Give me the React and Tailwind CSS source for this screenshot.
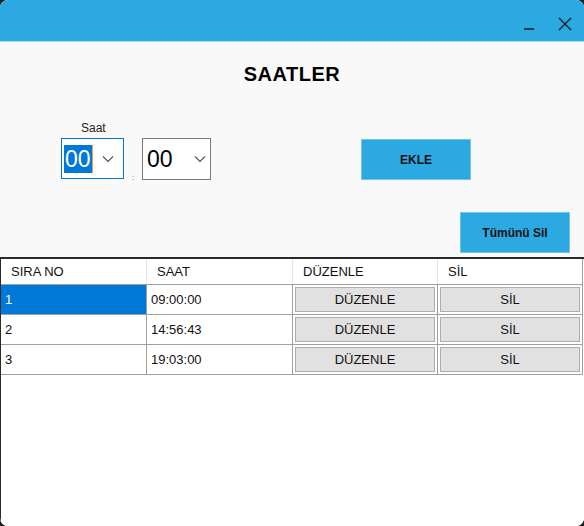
import React from "react";

const rows = [
  { no: "1", saat: "09:00:00", selected: true },
  { no: "2", saat: "14:56:43" },
  { no: "3", saat: "19:03:00" },
];

const Chevron = () => (
  <svg width="12" height="8" viewBox="0 0 12 8" className="text-[#555]">
    <path d="M1 1.5 L6 6.5 L11 1.5" fill="none" stroke="currentColor" strokeWidth="1.2" />
  </svg>
);

const CellButton = ({ label }) => (
  <div className="h-full p-[2px]">
    <div className="h-full bg-[#e1e1e1] border border-[#adadad] flex items-center justify-center text-[13px] text-[#111]">
      {label}
    </div>
  </div>
);

export default function App() {
  return (
    <div className="w-[584px] h-[526px] bg-[#1f1f1f] font-['Liberation_Sans',Arial,sans-serif]">
      <div className="w-full h-full rounded-[8px] overflow-hidden flex flex-col bg-white">
        {/* title bar */}
        <div className="h-[42px] bg-[#2ca9e1] border-b border-[#a8dcf3] flex items-end justify-end pb-[10px] pr-[12px] gap-[24px] shrink-0">
          <div className="w-[10px] h-[2px] bg-[#1d3b4c] mb-[1px]" />
          <svg width="14" height="14" viewBox="0 0 14 14">
            <path d="M1 1 L13 13 M13 1 L1 13" stroke="#1a2a33" strokeWidth="1.5" />
          </svg>
        </div>

        {/* form area */}
        <div className="bg-[#f9f9f9] h-[215px] shrink-0">
          <h1 className="text-center text-[20px] font-bold tracking-[0.5px] text-black mt-[21px] leading-[22px]">SAATLER</h1>
          <div className="flex mt-[36px]">
            <div className="ml-[61px] flex flex-col">
              <span className="text-[12px] text-[#222] ml-[20px] leading-[14px]">Saat</span>
              <div className="flex items-start mt-[3px]">
                <div className="w-[63px] h-[41px] bg-white border border-[#0078d7] flex items-center pl-[2px] pr-[9px] justify-between">
                  <span className="bg-[#0078d7] text-white text-[23px] leading-[28px] px-[1px] border-r border-[#f29b4a]">00</span>
                  <Chevron />
                </div>
                <span className="w-[18px] text-center text-[8px] text-[#666] mt-[36px] leading-[8px]">:</span>
                <div className="w-[69px] h-[42px] bg-white border border-[#7a7a7a] flex items-center pl-[4px] pr-[4px] justify-between">
                  <span className="text-black text-[23px] leading-[28px]">00</span>
                  <Chevron />
                </div>
              </div>
            </div>
            <div className="ml-[150px] mt-[18px] w-[110px] h-[41px] bg-[#2ca9e1] border border-[#6ec6ee] flex items-center justify-center text-[12px] font-bold text-[#111]">
              EKLE
            </div>
          </div>
          <div className="flex justify-end pr-[14px] mt-[30px]">
            <div className="w-[110px] h-[41px] bg-[#2ca9e1] border border-[#6ec6ee] flex items-center justify-center text-[12px] font-bold text-[#111]">
              Tümünü Sil
            </div>
          </div>
        </div>

        {/* grid */}
        <div className="flex-1 bg-white border-t-2 border-t-[#2a2a2a] border-l border-l-[#2a2a2a] flex flex-col">
          <div className="grid grid-cols-[146px_146px_145px_144px] border-b border-[#a0a0a0] border-r border-r-[#a0a0a0] w-[582px]">
            {["SIRA NO", "SAAT", "DÜZENLE", "SİL"].map((h, i) => (
              <div
                key={h}
                className={`h-[25px] flex items-center text-[13px] text-[#111] pl-[10px] ${i < 3 ? "border-r border-[#e4e4e4]" : ""}`}
              >
                {h}
              </div>
            ))}
            {rows.map((r) => (
              <React.Fragment key={r.no}>
                <div
                  className={`h-[30px] flex items-center pl-[4px] text-[13px] border-t border-r border-[#a0a0a0] ${r.selected ? "bg-[#0078d7] text-white" : "bg-white text-[#111]"}`}
                >
                  {r.no}
                </div>
                <div className="h-[30px] flex items-center pl-[4px] text-[13px] text-[#111] border-t border-r border-[#a0a0a0] bg-white">
                  {r.saat}
                </div>
                <div className="h-[30px] border-t border-r border-[#a0a0a0] bg-white">
                  <CellButton label="DÜZENLE" />
                </div>
                <div className="h-[30px] border-t border-[#a0a0a0] bg-white">
                  <CellButton label="SİL" />
                </div>
              </React.Fragment>
            ))}
          </div>
        </div>
      </div>
    </div>
  );
}
